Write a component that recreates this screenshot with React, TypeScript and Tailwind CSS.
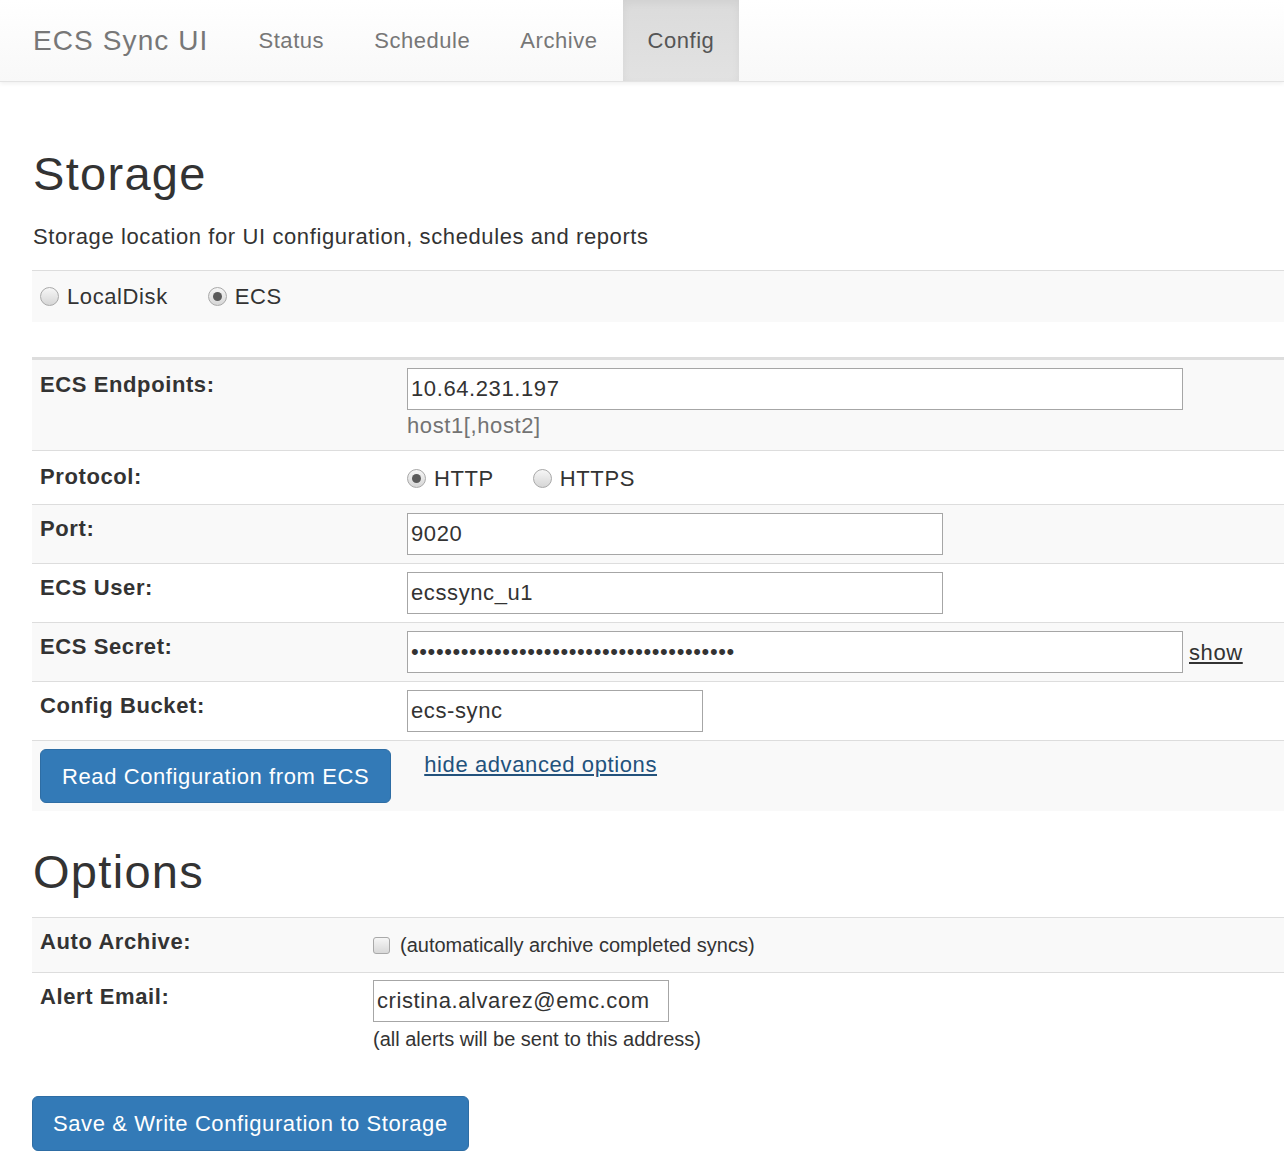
import { useState } from "react";

const font = { fontFamily: '"Liberation Sans", Arial, Helvetica, sans-serif' };

function Radio({ checked }: { checked?: boolean }) {
  return (
    <span className="flex h-[19px] w-[19px] shrink-0 items-center justify-center rounded-full border border-[#a9a9a9] bg-linear-to-b from-[#f6f6f6] to-[#d6d6d6]">
      {checked && <span className="h-[9px] w-[9px] rounded-full bg-[#5a5a5a]" />}
    </span>
  );
}

function RadioOption({ label, checked, className = "" }: { label: string; checked?: boolean; className?: string }) {
  return (
    <label className={`flex items-center gap-[8px] ${className}`}>
      <Radio checked={checked} />
      <span>{label}</span>
    </label>
  );
}

function TextInput({ value, width, type = "text" }: { value: string; width: string; type?: string }) {
  return (
    <input
      type={type}
      defaultValue={value}
      className={`block h-[42px] ${width} border border-[#a6a6a6] bg-white px-[3px] text-[22px] tracking-[0.6px] text-[#333] outline-none`}
      style={font}
    />
  );
}

export default function App() {
  const [showSecret, setShowSecret] = useState(false);
  const nav = ["Status", "Schedule", "Archive", "Config"];

  return (
    <div className="min-h-[1168px] bg-white text-[22px] leading-[31px] tracking-[0.6px] text-[#333]" style={font}>
      <nav className="flex h-[82px] border-b border-[#e3e3e3] bg-linear-to-b from-white to-[#f8f8f8] pl-[33px] shadow-[0_2px_4px_rgba(0,0,0,0.06)]">
        <span className="flex items-center pr-[25px] text-[28px] tracking-[1.1px] text-[#777]">ECS Sync UI</span>
        <ul className="flex">
          {nav.map((n) => (
            <li
              key={n}
              className={`flex items-center px-[25px] text-[22px] tracking-[0.55px] ${
                n === "Config"
                  ? "bg-linear-to-b from-[#dbdbdb] to-[#e2e2e2] text-[#555] shadow-[inset_0_3px_9px_rgba(0,0,0,0.05)]"
                  : "text-[#777]"
              }`}
            >
              {n}
            </li>
          ))}
        </ul>
      </nav>

      <main className="pl-[32px]">
        <h2 className="ml-[1px] mt-[66px] text-[47px] leading-[52px] tracking-[1.3px] font-normal">Storage</h2>
        <p className="ml-[1px] mt-[21px]">Storage location for UI configuration, schedules and reports</p>

        <div className="mt-[18px] flex h-[52px] items-center border-t border-[#ddd] bg-[#f9f9f9] pl-[8px]">
          <RadioOption label="LocalDisk" />
          <RadioOption label="ECS" checked className="ml-[40px]" />
        </div>

        <table className="mt-[35px] w-full border-collapse border-t-[3px] border-[#ddd]">
          <tbody>
            <tr className="bg-[#f9f9f9]">
              <td className="w-[367px] px-[8px] pt-[9px] pb-[8px] align-top font-bold">ECS Endpoints:</td>
              <td className="px-[8px] pt-[8px] pb-[9px] align-top">
                <TextInput value="10.64.231.197" width="w-[776px]" />
                <div className="text-[#737373]">host1[,host2]</div>
              </td>
            </tr>
            <tr className="border-t border-[#ddd]">
              <td className="px-[8px] pt-[10px] pb-[8px] align-top font-bold">Protocol:</td>
              <td className="px-[8px] py-[8px] align-top">
                <div className="flex h-[37px] items-center pt-[1px]">
                  <RadioOption label="HTTP" checked />
                  <RadioOption label="HTTPS" className="ml-[39px]" />
                </div>
              </td>
            </tr>
            <tr className="border-t border-[#ddd] bg-[#f9f9f9]">
              <td className="px-[8px] py-[8px] align-top font-bold">Port:</td>
              <td className="px-[8px] py-[8px] align-top">
                <TextInput value="9020" width="w-[536px]" />
              </td>
            </tr>
            <tr className="border-t border-[#ddd]">
              <td className="px-[8px] py-[8px] align-top font-bold">ECS User:</td>
              <td className="px-[8px] py-[8px] align-top">
                <TextInput value="ecssync_u1" width="w-[536px]" />
              </td>
            </tr>
            <tr className="border-t border-[#ddd] bg-[#f9f9f9]">
              <td className="px-[8px] py-[8px] align-top font-bold">ECS Secret:</td>
              <td className="px-[8px] py-[8px] align-top">
                <div className="flex items-center gap-[6px]">
                  <TextInput
                    value="abcdefghijklmnopqrstuvwxyz0123456789ABC"
                    width="w-[776px]"
                    type={showSecret ? "text" : "password"}
                  />
                  <a
                    href="#"
                    onClick={(e) => {
                      e.preventDefault();
                      setShowSecret(!showSecret);
                    }}
                    className="text-[#333] underline"
                  >
                    show
                  </a>
                </div>
              </td>
            </tr>
            <tr className="border-t border-[#ddd]">
              <td className="px-[8px] py-[8px] align-top font-bold">Config Bucket:</td>
              <td className="px-[8px] py-[8px] align-top">
                <TextInput value="ecs-sync" width="w-[296px]" />
              </td>
            </tr>
            <tr className="border-t border-[#ddd] bg-[#f9f9f9]">
              <td colSpan={2} className="px-[8px] py-[8px]">
                <div className="flex items-start">
                  <button className="h-[54px] rounded-[6px] border border-[#2e6da4] bg-[#337ab7] px-[21px] text-[22px] tracking-[0.6px] text-white">
                    Read Configuration from ECS
                  </button>
                  <a href="#" className="ml-[33px] mt-[0px] text-[#23527c] underline">
                    hide advanced options
                  </a>
                </div>
              </td>
            </tr>
          </tbody>
        </table>

        <h2 className="ml-[1px] mt-[35px] text-[47px] leading-[52px] tracking-[1.3px] font-normal">Options</h2>

        <table className="mt-[19px] w-full border-collapse border-t border-[#ddd]">
          <tbody>
            <tr className="bg-[#f9f9f9]">
              <td className="w-[333px] px-[8px] pt-[8px] pb-[13px] align-top font-bold">Auto Archive:</td>
              <td className="px-[8px] pt-[8px] pb-[13px] align-top">
                <div className="flex items-center gap-[10px] pt-[5px] text-[20px] leading-[28px] tracking-normal">
                  <span className="h-[17px] w-[17px] shrink-0 rounded-[3px] border border-[#a9a9a9] bg-linear-to-b from-[#f6f6f6] to-[#d8d8d8]" />
                  <span>(automatically archive completed syncs)</span>
                </div>
              </td>
            </tr>
            <tr className="border-t border-[#ddd]">
              <td className="px-[8px] py-[8px] align-top font-bold">Alert Email:</td>
              <td className="px-[8px] pt-[7px] pb-[8px] align-top">
                <TextInput value="cristina.alvarez@emc.com" width="w-[296px]" />
                <div className="mt-[3px] text-[20px] leading-[28px] tracking-normal">(all alerts will be sent to this address)</div>
              </td>
            </tr>
          </tbody>
        </table>

        <button className="mt-[35px] h-[55px] rounded-[6px] border border-[#2e6da4] bg-[#337ab7] px-[20px] text-[22px] tracking-[0.6px] text-white">
          Save &amp; Write Configuration to Storage
        </button>
      </main>
    </div>
  );
}
